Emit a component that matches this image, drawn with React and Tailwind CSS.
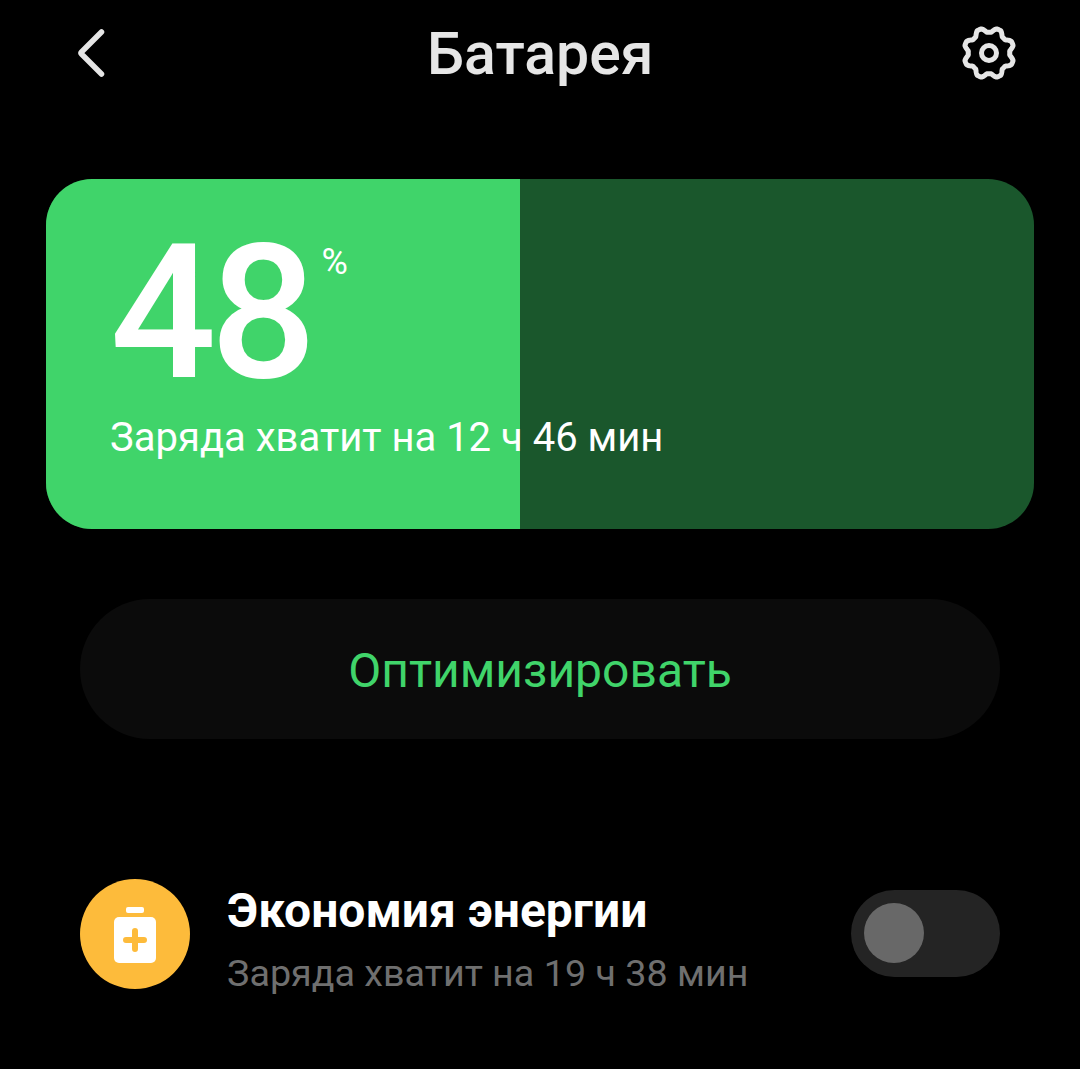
const gearPath = (() => {
  // wavy outline with 8 rounded teeth, notch at the top
  const pts = []
  for (let i = 0; i < 240; i++) {
    const t = (i / 240) * Math.PI * 2
    const wave = Math.max(-0.75, Math.min(0.75, -Math.cos(8 * t)))
    const r = 23 + wave * 3
    const x = 30 + r * Math.sin(t)
    const y = 30 - r * Math.cos(t)
    pts.push(`${x.toFixed(2)} ${y.toFixed(2)}`)
  }
  return `M${pts.join('L')}Z`
})()

function GearIcon() {
  return (
    <svg width="60" height="60" viewBox="0 0 60 60" fill="none" stroke="#e6e6e6" strokeWidth="5" strokeLinejoin="round" aria-hidden>
      <path d={gearPath} />
      <circle cx="30" cy="30" r="7.5" />
    </svg>
  )
}

function BackIcon() {
  return (
    <svg width="30" height="52" viewBox="0 0 30 52" fill="none" stroke="#e6e6e6" strokeWidth="5.5" strokeLinecap="round" strokeLinejoin="round" aria-hidden>
      <path d="M25.5 5 L5.5 25 Q4.5 26 5.5 27 L25.5 47" />
    </svg>
  )
}

function BottleIcon() {
  return (
    <div className="flex h-[110px] w-[110px] shrink-0 flex-col items-center justify-center rounded-full bg-[#fdbb3b] pt-px">
      <div className="h-[6px] w-[18px] rounded-[2px] bg-white" />
      <div className="mt-[4px] flex h-[46px] w-[42px] items-center justify-center rounded-[5px] bg-white">
        <svg width="24" height="24" viewBox="0 0 24 24" fill="none" stroke="#fdbb3b" strokeWidth="6" strokeLinecap="round" aria-hidden>
          <path d="M3 12H21M12 3V21" />
        </svg>
      </div>
    </div>
  )
}

export default function App() {
  return (
    <div className="h-[1069px] overflow-hidden bg-black font-['Roboto',sans-serif]">
      <header className="flex h-[106px] items-center pr-[61px] pl-[76px]">
        <BackIcon />
        <h1 className="ml-[321px] text-[59px] leading-none font-medium text-[#e6e6e6]">Батарея</h1>
        <div className="ml-auto">
          <GearIcon />
        </div>
      </header>

      <section className="relative mx-[46px] mt-[73px] flex h-[350px] overflow-hidden rounded-[46px] bg-[#1a572c]">
        <div className="w-[48%] bg-[#40d46a]" />
        <div className="absolute top-0 left-[64px] text-white">
          <div className="flex items-start">
            <span className="mt-[41px] text-[187px] leading-[187px] font-medium tracking-[-6px]">48</span>
            <span className="mt-[65px] ml-[11px] text-[36px] leading-none">%</span>
          </div>
          <p className="mt-[11px] text-[40px] leading-none whitespace-nowrap">Заряда хватит на 12 ч 46 мин</p>
        </div>
      </section>

      <button type="button" className="mx-[80px] mt-[70px] block h-[140px] w-[920px] rounded-full bg-[#0b0b0b] pt-[4px] text-[48px] text-[#40d46a]">
        Оптимизировать
      </button>

      <section className="mx-[80px] mt-[140px] flex h-[110px] items-center">
        <BottleIcon />
        <div className="ml-[37px] pt-[11px]">
          <div className="text-[48px] leading-none font-bold text-white">Экономия энергии</div>
          <div className="mt-[20px] text-[37.7px] leading-none text-[#6f6f6f]">Заряда хватит на 19 ч 38 мин</div>
        </div>
        <div className="mb-[2px] ml-auto flex h-[87px] w-[149px] items-center rounded-full bg-[#242424] pl-[13px]">
          <div className="h-[60px] w-[60px] rounded-full bg-[#686868]" />
        </div>
      </section>
    </div>
  )
}
